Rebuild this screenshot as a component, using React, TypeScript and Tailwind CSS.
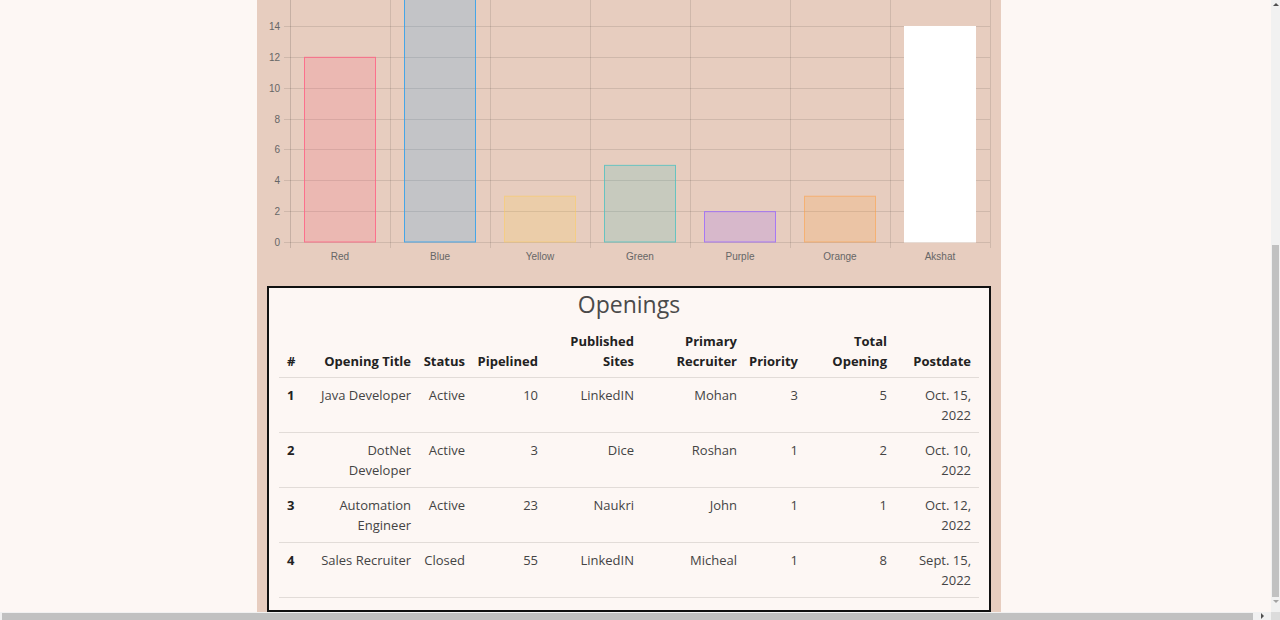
import React from "react";

const bars = [
  { label: "Red", v: 12, fill: "rgba(255,99,132,0.2)", stroke: "rgba(255,99,132,0.85)" },
  { label: "Blue", v: 19, fill: "rgba(54,162,235,0.2)", stroke: "rgba(54,162,235,0.9)" },
  { label: "Yellow", v: 3, fill: "rgba(255,206,86,0.2)", stroke: "rgba(255,206,86,0.5)" },
  { label: "Green", v: 5, fill: "rgba(75,192,192,0.2)", stroke: "rgba(75,192,192,0.8)" },
  { label: "Purple", v: 2, fill: "rgba(153,102,255,0.2)", stroke: "rgba(153,102,255,0.8)" },
  { label: "Orange", v: 3, fill: "rgba(255,159,64,0.2)", stroke: "rgba(255,159,64,0.55)" },
  { label: "Akshat", v: 14, fill: "#ffffff", stroke: "#ffffff" },
];

const Y0 = 242;
const U = 15.43;

function Chart() {
  const ticks = [0, 2, 4, 6, 8, 10, 12, 14];
  return (
    <svg width={744} height={276} className="block">
      <g transform="translate(-257,0)" fontFamily="'Liberation Sans', Arial, sans-serif" fontSize={10} fill="#666">
        {ticks.map((t) => {
          const y = Math.round(Y0 - t * U) + 0.5;
          return (
            <g key={t}>
              <line x1={284} x2={990} y1={y} y2={y} stroke="rgba(0,0,0,0.1)" strokeWidth={1} />
              <text x={280} y={y + 3.5} textAnchor="end">{t}</text>
            </g>
          );
        })}
        {[0, 1, 2, 3, 4, 5, 6, 7].map((k) => (
          <line key={k} x1={290.5 + 100 * k} x2={290.5 + 100 * k} y1={0} y2={248} stroke={k === 0 ? "rgba(0,0,0,0.14)" : "rgba(0,0,0,0.1)"} strokeWidth={1} />
        ))}
        {bars.map((b, i) => {
          const top = Y0 - b.v * U;
          const x = 304 + 100 * i;
          return (
            <g key={b.label}>
              <rect x={x + 0.5} y={top + 0.5} width={71} height={Y0 - top - 0.5} fill={b.fill} stroke={b.stroke} strokeWidth={1} />
              <text x={340 + 100 * i} y={259.5} textAnchor="middle">{b.label}</text>
            </g>
          );
        })}
      </g>
    </svg>
  );
}

const rows = [
  ["1", "Java Developer", "Active", "10", "LinkedIN", "Mohan", "3", "5", "Oct. 15, 2022"],
  ["2", "DotNet Developer", "Active", "3", "Dice", "Roshan", "1", "2", "Oct. 10, 2022"],
  ["3", "Automation Engineer", "Active", "23", "Naukri", "John", "1", "1", "Oct. 12, 2022"],
  ["4", "Sales Recruiter", "Closed", "55", "LinkedIN", "Micheal", "1", "8", "Sept. 15, 2022"],
];

const widths = [22, 118, 54, 73, 96, 103, 61, 89, 84];

function Table() {
  const heads: React.ReactNode[] = [
    "#",
    "Opening Title",
    "Status",
    "Pipelined",
    <>Published<br />Sites</>,
    <>Primary<br />Recruiter</>,
    "Priority",
    <>Total<br />Opening</>,
    "Postdate",
  ];
  return (
    <table className="table-fixed border-collapse w-[700px] text-[13px] leading-[20px]">
      <colgroup>
        {widths.map((w, i) => (
          <col key={i} style={{ width: w }} />
        ))}
      </colgroup>
      <thead>
        <tr>
          {heads.map((h, i) => (
            <th key={i} className={`align-bottom font-bold text-[#222] pt-[8px] pb-[6px] border-b border-[#e2dcd8] ${i === 0 ? "text-left pl-[8px] pr-0" : "px-[8px]"}`}>
              {i === 0 ? h : (
                <div className="flex justify-end">
                  <span className="text-right whitespace-nowrap">{h}</span>
                </div>
              )}
            </th>
          ))}
        </tr>
      </thead>
      <tbody>
        {rows.map((r) => (
          <tr key={r[0]}>
            {r.map((c, i) => (
              <td key={i} className={`align-top pt-[7px] pb-[7px] border-b border-[#e2dcd8] ${i === 0 ? "text-left font-bold text-[#222] pl-[8px] pr-0" : "text-[#444] px-[8px]"}`}>
                {i === 0 ? c : (
                  <div className="flex justify-end">
                    <span className="text-right">{c}</span>
                  </div>
                )}
              </td>
            ))}
          </tr>
        ))}
      </tbody>
    </table>
  );
}

export default function App() {
  return (
    <div className="w-[1280px] h-[620px] overflow-hidden flex flex-col bg-[#fdf7f4]" style={{ fontFamily: "'Open Sans', 'Noto Sans', sans-serif" }}>
      <div className="flex h-[612px]">
        <div className="flex-1 overflow-hidden pl-[257px]">
          <div className="w-[744px] h-full bg-[#e7cdbf] flex flex-col">
            <Chart />
            <div className="mx-[10px] mt-[10px] h-[326px] border-2 border-[#111] bg-[#fdf7f4] px-[10px] pt-px">
              <h2 className="text-center text-[23px] leading-[30px] text-[#4a4a4a] mb-[4px]">Openings</h2>
              <Table />
            </div>
          </div>
        </div>
        <div className="w-[9px] bg-[#f1f1f1] flex flex-col items-center relative">
          <div className="mt-[3px] w-0 h-0 border-l-[3px] border-r-[3px] border-b-[3px] border-l-transparent border-r-transparent border-b-[#505050]" />
          <div className="mt-[239px] w-[7px] h-[352px] bg-[#c1c1c1]" />
          <div className="mt-[3px] w-0 h-0 border-l-[3px] border-r-[3px] border-t-[3px] border-l-transparent border-r-transparent border-t-[#a3a3a3]" />
        </div>
      </div>
      <div className="flex h-[8px] bg-[#f1f1f1]">
        <div className="flex-1 flex items-center">
          <div className="ml-[2px] w-[1251px] h-[7px] bg-[#c1c1c1]" />
          <div className="ml-[8px] w-0 h-0 border-t-[3px] border-b-[3px] border-l-[3px] border-t-transparent border-b-transparent border-l-[#505050]" />
        </div>
        <div className="w-[9px] bg-[#dcdcdc]" />
      </div>
    </div>
  );
}
